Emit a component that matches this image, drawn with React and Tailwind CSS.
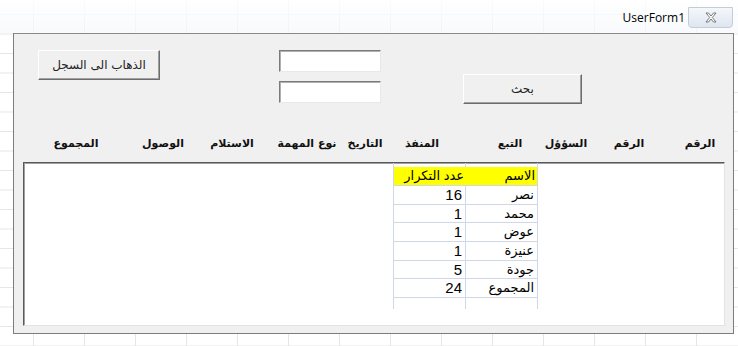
import React from "react";

const headers = [
  { t: "المجموع", ml: 62 },
  { t: "الوصول", ml: 87 },
  { t: "الاستلام", ml: 69 },
  { t: "نوع المهمة", ml: 75 },
  { t: "التاريخ", ml: 58 },
  { t: "المنفذ", ml: 57 },
  { t: "التبع", ml: 88 },
  { t: "السؤؤل", ml: 56 },
  { t: "الرقم", ml: 63 },
  { t: "الرقم", ml: 71 },
];

const rows = [
  ["16", "نصر"],
  ["1", "محمد"],
  ["1", "عوض"],
  ["1", "عنيزة"],
  ["5", "جودة"],
  ["24", "المجموع"],
];

const ar = "font-['DejaVu_Sans','Noto_Sans',sans-serif]";

function Btn({ children, className }) {
  return (
    <div
      className={`flex items-center justify-center bg-[#f0f0f0] border border-t-white border-l-white border-r-[#6d6d6d] border-b-[#6d6d6d] shadow-[inset_-1px_-1px_0_#a0a0a0] text-[12px] text-[#222] ${ar} ${className}`}
      dir="rtl"
    >
      {children}
    </div>
  );
}

function TextBox() {
  return (
    <div className="w-[102px] h-[22px] bg-white border border-t-[#7a7a7a] border-l-[#7a7a7a] border-r-[#e8e8e8] border-b-[#e8e8e8] shadow-[inset_1px_1px_0_#b0b0b0]" />
  );
}

export default function App() {
  return (
    <div className="w-[738px] h-[346px] overflow-hidden bg-white bg-[linear-gradient(to_right,#e6e6e6_1px,transparent_1px),linear-gradient(to_bottom,#e6e6e6_1px,transparent_1px)] bg-[size:51px_19.5px] bg-[position:33px_14px] flex flex-col">
      {/* title bar */}
      <div className="h-[33px] flex items-start justify-end pr-[5px] bg-[linear-gradient(to_bottom,rgba(255,255,255,0.85),rgba(245,248,252,0.7))]">
        <div className="mt-[11px] mr-[3px] text-[12px] leading-[14px] text-black font-['Open_Sans','Liberation_Sans',sans-serif]">
          UserForm1
        </div>
        <div className="mt-[7px] w-[45px] h-[21px] rounded-b-[4px] border border-[#c4ccd6] bg-[linear-gradient(to_bottom,#f4f7fb,#dfe6ef)] flex items-center justify-center">
          <svg width="12" height="11" viewBox="0 0 12 11">
            <path
              d="M1 1 L3.5 1 L6 4 L8.5 1 L11 1 L7.3 5.5 L11 10 L8.5 10 L6 7 L3.5 10 L1 10 L4.7 5.5 Z"
              fill="#fff"
              stroke="#6a6a6a"
              strokeWidth="0.9"
              strokeLinejoin="round"
            />
          </svg>
        </div>
      </div>

      {/* form */}
      <div className="ml-[13px] w-[721px] h-[301px] bg-[#f0f0f0] border border-[#7d7d7d] border-t-[#8a8a8a] flex flex-col">
        {/* top controls */}
        <div className="flex items-start pl-[24px] pt-[16px] h-[86px]">
          <Btn className="w-[122px] h-[30px]">الذهاب الى السجل</Btn>
          <div className="ml-[119px] flex flex-col gap-[9px]">
            <TextBox />
            <TextBox />
          </div>
          <Btn className="ml-[82px] mt-[24px] w-[119px] h-[30px]">بحث</Btn>
        </div>

        {/* header labels */}
        <div className="mt-[10px] flex items-center h-[28px]">
          {headers.map((h, i) => (
            <div
              key={i}
              className={`w-0 flex justify-center whitespace-nowrap text-[11px] font-bold text-[#111] ${ar}`}
              style={{ marginLeft: h.ml }}
              dir="rtl"
            >
              {h.t}
            </div>
          ))}
        </div>

        {/* list box */}
        <div className="mt-[4px] ml-[9px] w-[702px] h-[164px] bg-white border border-t-[#5a5a5a] border-l-[#5a5a5a] border-r-[#e3e3e3] border-b-[#e3e3e3] shadow-[inset_1px_1px_0_#a0a0a0] pl-[369px]">
          <div className="w-[145px] h-[146px] border-l border-r border-[#d0d7e5] flex flex-col">
            <div className="h-[4px] flex">
              <div className="w-[72px] border-r border-[#d0d7e5]" />
            </div>
            <div className="h-[19px] flex bg-[#ffff00] border-b border-[#d0d7e5]">
              <div className="w-[72px] text-right pr-[2px] text-[13px] leading-[18px] text-black font-['Liberation_Sans','DejaVu_Sans',sans-serif]" dir="rtl">
                عدد التكرار
              </div>
              <div className="flex-1 text-right pr-[2px] text-[13px] leading-[18px] text-black font-['Liberation_Sans','DejaVu_Sans',sans-serif]" dir="rtl">
                الاسم
              </div>
            </div>
            {rows.map((r, i) => (
              <div key={i} className="h-[18.7px] flex border-b border-[#d0d7e5]">
                <div className="w-[72px] border-r border-[#d0d7e5] text-right pr-[3px] text-[15px] leading-[18px] text-black font-['Liberation_Sans',sans-serif]">
                  {r[0]}
                </div>
                <div className="flex-1 text-right pr-[3px] text-[13px] leading-[18px] text-black font-['Liberation_Sans','DejaVu_Sans',sans-serif]" dir="rtl">
                  {r[1]}
                </div>
              </div>
            ))}
            <div className="flex-1 flex">
              <div className="w-[72px] border-r border-[#d0d7e5]" />
            </div>
          </div>
        </div>
      </div>
    </div>
  );
}
